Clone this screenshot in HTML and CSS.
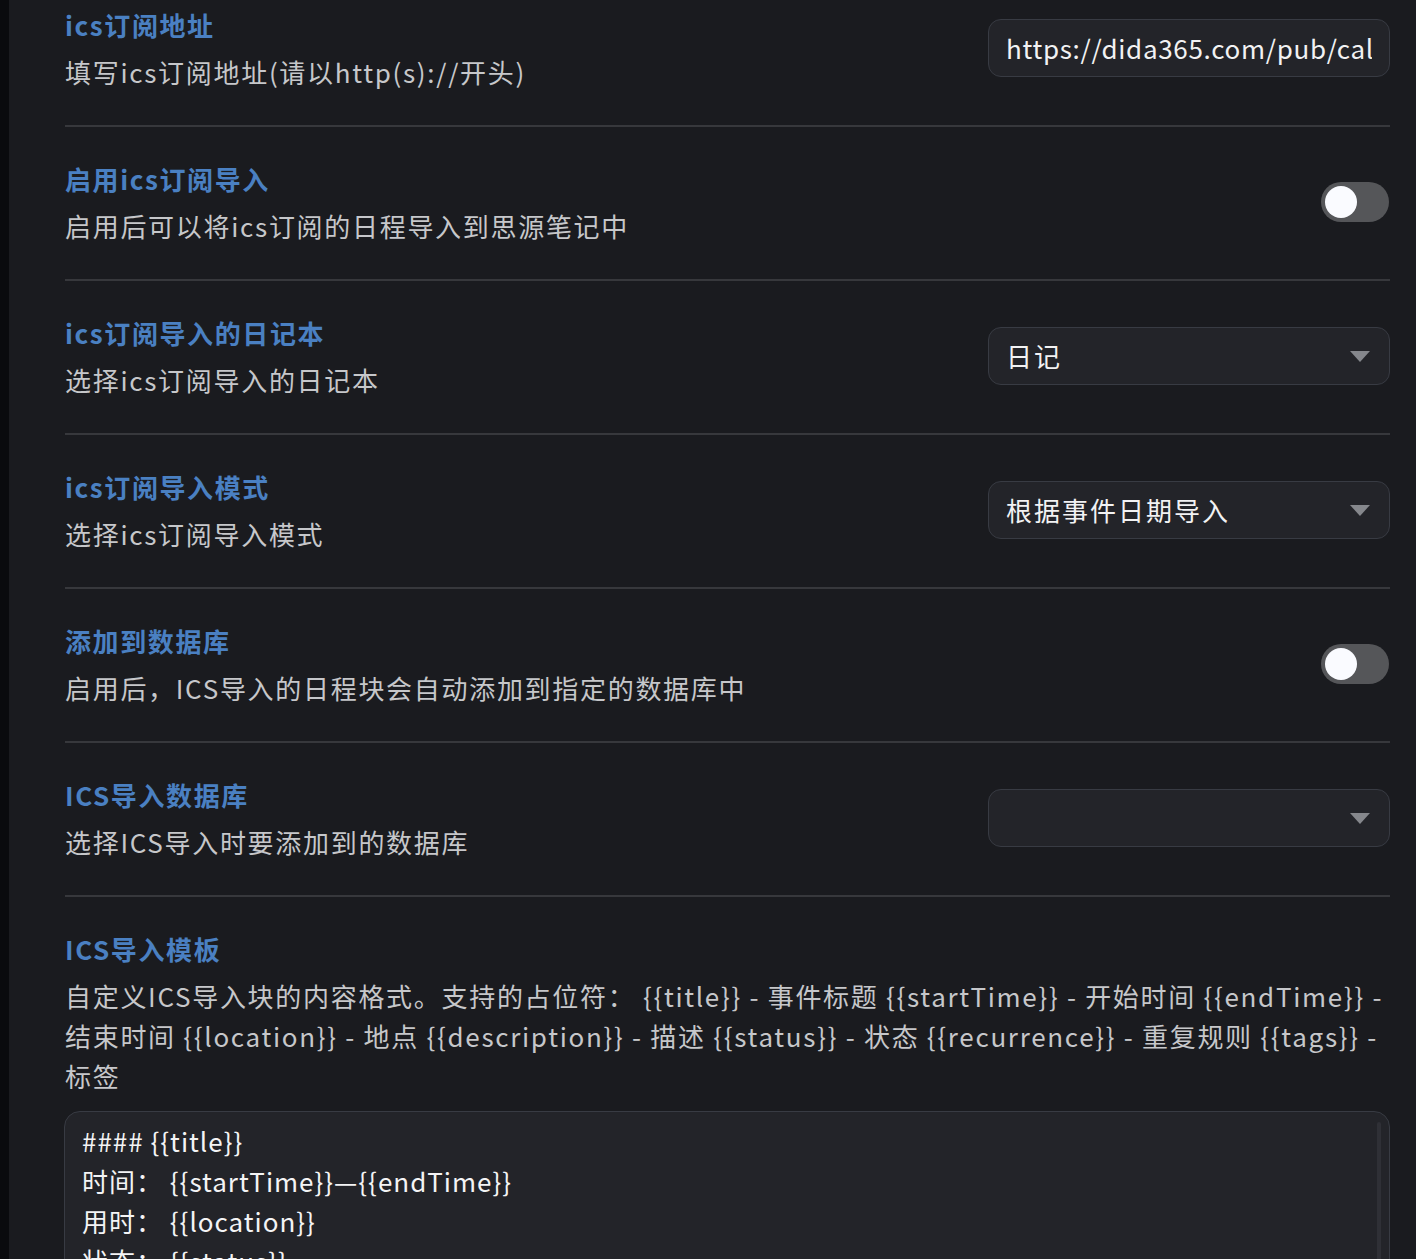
FILE: index.html
```html
<!DOCTYPE html>
<html>
<head>
  <title>ICS 订阅设置</title>
  <link rel="stylesheet" href="styles.css">
</head>
<body>
  <div class="layout">
    <div class="side-strip"></div>

    <main class="panel">
      <div class="item">
        <div class="item-text">
          <div class="item-title">ics订阅地址</div>
          <div class="item-desc">填写ics订阅地址(请以http(s)://开头)</div>
        </div>
        <input class="field" type="text" value="https://dida365.com/pub/calendar/feeds/ics">
      </div>

      <div class="item">
        <div class="item-text">
          <div class="item-title">启用ics订阅导入</div>
          <div class="item-desc">启用后可以将ics订阅的日程导入到思源笔记中</div>
        </div>
        <div class="switch"><span class="knob"></span></div>
      </div>

      <div class="item">
        <div class="item-text">
          <div class="item-title">ics订阅导入的日记本</div>
          <div class="item-desc">选择ics订阅导入的日记本</div>
        </div>
        <div class="field select">
          <span>日记</span>
          <svg class="caret" width="20" height="11" viewBox="0 0 20 11"><path d="M0 0 H20 L10 11 Z" fill="#85878c"/></svg>
        </div>
      </div>

      <div class="item">
        <div class="item-text">
          <div class="item-title">ics订阅导入模式</div>
          <div class="item-desc">选择ics订阅导入模式</div>
        </div>
        <div class="field select">
          <span>根据事件日期导入</span>
          <svg class="caret" width="20" height="11" viewBox="0 0 20 11"><path d="M0 0 H20 L10 11 Z" fill="#85878c"/></svg>
        </div>
      </div>

      <div class="item">
        <div class="item-text">
          <div class="item-title">添加到数据库</div>
          <div class="item-desc">启用后，ICS导入的日程块会自动添加到指定的数据库中</div>
        </div>
        <div class="switch"><span class="knob"></span></div>
      </div>

      <div class="item">
        <div class="item-text">
          <div class="item-title">ICS导入数据库</div>
          <div class="item-desc">选择ICS导入时要添加到的数据库</div>
        </div>
        <div class="field select">
          <span></span>
          <svg class="caret" width="20" height="11" viewBox="0 0 20 11"><path d="M0 0 H20 L10 11 Z" fill="#85878c"/></svg>
        </div>
      </div>

      <div class="item item-block">
        <div class="item-title">ICS导入模板</div>
        <div class="item-desc">自定义ICS导入块的内容格式。支持的占位符： {{title}} - 事件标题 {{startTime}} - 开始时间 {{endTime}} -<br>结束时间 {{location}} - 地点 {{description}} - 描述 {{status}} - 状态 {{recurrence}} - 重复规则 {{tags}} -<br>标签</div>
        <div class="template-box">
          <textarea class="template" spellcheck="false">#### {{title}}
时间： {{startTime}}—{{endTime}}
用时： {{location}}
状态： {{status}}
描述： {{description}}
标签： {{tags}}</textarea>
          <div class="template-scroll"></div>
        </div>
      </div>
    </main>
  </div>
</body>
</html>
```

FILE: styles.css
```css
/* settings panel, dark theme */
html, body {
  margin: 0;
  padding: 0;
  height: 100%;
  overflow: hidden;
}

body {
  background-color: #1a1b1f;
  font-family: "Noto Sans CJK SC", "Noto Sans", sans-serif;
  color: #c9cacd;
}

.layout {
  display: flex;
  min-height: 100%;
}

.side-strip {
  width: 9px;
  flex-shrink: 0;
  background-color: #0a0b0e;
}

.panel {
  flex: 1;
  margin-top: -27px;
  padding: 0 26px 0 56px;
}

.item {
  display: flex;
  align-items: center;
  justify-content: space-between;
  padding: 30px 0 33px;
  border-bottom: 2px solid #37383c;
}

.item-title {
  font-size: 26px;
  line-height: 44px;
  font-weight: bold;
  color: #4a80c2;
  letter-spacing: 1.6px;
}

.item-desc {
  margin-top: 5px;
  font-size: 26px;
  line-height: 40px;
  color: #c6c7ca;
  letter-spacing: 1.7px;
}

.field {
  box-sizing: border-box;
  width: 402px;
  height: 58px;
  border: 1px solid #383b43;
  border-radius: 13px;
  background-color: #232429;
  color: #f2f2f3;
  font-family: "Noto Sans CJK SC", "Noto Sans", sans-serif;
  font-size: 26px;
  letter-spacing: 0.7px;
  padding: 0 17px;
  outline: none;
}

.select {
  display: flex;
  align-items: center;
  justify-content: space-between;
  padding-right: 19px;
  letter-spacing: 2px;
}

.caret {
  margin-top: 2px;
}

.switch {
  box-sizing: border-box;
  width: 68px;
  height: 40px;
  padding: 4px;
  border-radius: 20px;
  background-color: #555659;
  display: flex;
  align-items: center;
  margin-right: 1px;
}

.knob {
  width: 32px;
  height: 32px;
  border-radius: 50%;
  background-color: #fafbff;
}

.item-block {
  display: block;
  border-bottom: none;
}

.template-box {
  display: flex;
  box-sizing: border-box;
  width: calc(100% + 1px);
  height: 280px;
  margin: 15px 0 0 -1px;
  padding: 9px 8px 9px 17px;
  border: 1px solid #383b43;
  border-radius: 16px;
  background-color: #232429;
}

.template {
  flex: 1;
  padding: 0;
  border: none;
  background: transparent;
  color: #f4f4f5;
  font-family: "Noto Sans CJK SC", "Noto Sans", sans-serif;
  font-size: 26px;
  line-height: 40px;
  letter-spacing: 1px;
  resize: none;
  outline: none;
  overflow: hidden;
}

.template-scroll {
  width: 4px;
  margin-top: 1px;
  border-radius: 2px;
  background-color: #2f3036;
}
```
